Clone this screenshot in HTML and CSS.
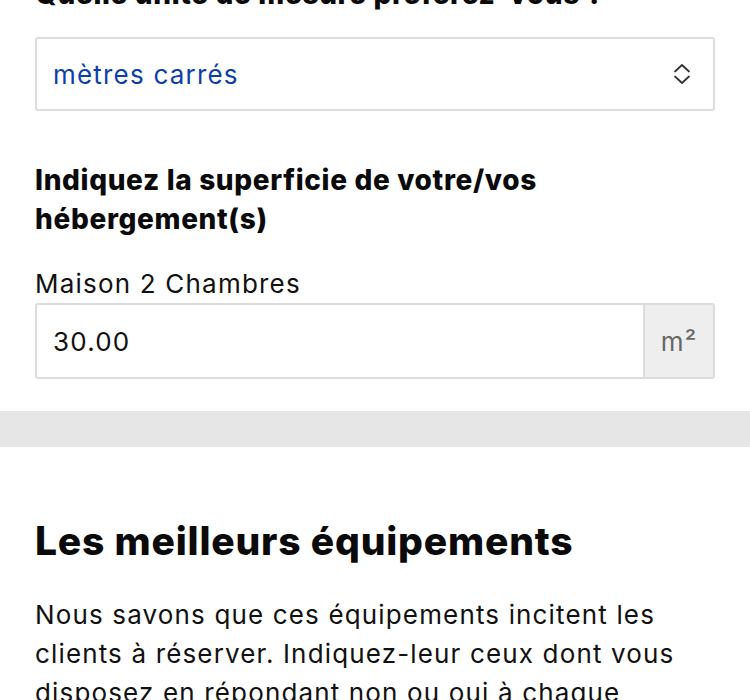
FILE: index.html
```html
<!DOCTYPE html>
<html lang="fr">
<head>
<meta charset="utf-8">
<link rel="stylesheet" href="styles.css">
</head>
<body>
<div class="form">
  <h2 class="q first">Quelle unité de mesure préférez-vous ?</h2>
  <div class="select">
    <span class="select-value">mètres carrés</span>
    <svg class="chev" width="18" height="22" viewBox="0 0 18 22" fill="none" stroke="#333" stroke-width="1.8" stroke-linecap="round" stroke-linejoin="round"><path d="M2 8.5 L9 2 L16 8.5"/><path d="M2 13.5 L9 20 L16 13.5"/></svg>
  </div>
  <h2 class="q second">Indiquez la superficie de votre/vos hébergement(s)</h2>
  <label class="label">Maison 2 Chambres</label>
  <div class="input-group">
    <span class="input-value">30.00</span>
    <span class="addon">m²</span>
  </div>
</div>
<div class="band"></div>
<div class="section">
  <h1 class="title">Les meilleurs équipements</h1>
  <p class="text">Nous savons que ces équipements incitent les clients à réserver. Indiquez-leur ceux dont vous disposez en répondant non ou oui à chaque question.</p>
</div>
</body>
</html>
```
FILE: styles.css
```css
html, body {
  margin: 0;
  padding: 0;
  background: #fff;
  overflow: hidden;
}
body {
  font-family: Inter, Roboto, "Liberation Sans", sans-serif;
  color: #111;
}
.form {
  padding: 0 35px;
}
.q {
  font-size: 28px;
  font-weight: 800;
  line-height: 39px;
  letter-spacing: 0.65px;
  margin: 0;
  color: #0a0a0a;
}
.q.first {
  margin-top: -25px;
}
.q.second {
  margin-top: 50px;
}
.select {
  margin-top: 23px;
  height: 74px;
  box-sizing: border-box;
  border: 2px solid #dcdcdc;
  border-radius: 3px;
  display: flex;
  align-items: center;
  justify-content: space-between;
  padding: 0 22px 0 16px;
}
.select-value {
  font-size: 26px;
  letter-spacing: 1.2px;
  color: #0d3fa8;
}
.chev {
  display: block;
}
.label {
  display: block;
  margin-top: 25px;
  font-size: 26px;
  letter-spacing: 1.2px;
  line-height: 39px;
  color: #111;
}
.input-group {
  display: flex;
  height: 76px;
  box-sizing: border-box;
  border: 2px solid #dcdcdc;
  border-radius: 3px;
}
.input-value {
  flex: 1;
  display: flex;
  align-items: center;
  padding-left: 16px;
  font-size: 26px;
  letter-spacing: 1.2px;
  color: #111;
}
.addon {
  width: 68px;
  background: #eeeeee;
  border-left: 2px solid #dcdcdc;
  display: flex;
  align-items: center;
  justify-content: center;
  font-size: 26px;
  letter-spacing: 1px;
  color: #666;
}
.band {
  margin-top: 32px;
  height: 36px;
  background: #e6e6e6;
}
.section {
  padding: 70px 35px 0;
}
.title {
  margin: 0;
  font-size: 39px;
  line-height: 48px;
  font-weight: 800;
  letter-spacing: 0.8px;
  color: #0a0a0a;
}
.text {
  margin: 30px 0 0;
  font-size: 26px;
  line-height: 39px;
  letter-spacing: 1.15px;
  color: #111;
}
```
